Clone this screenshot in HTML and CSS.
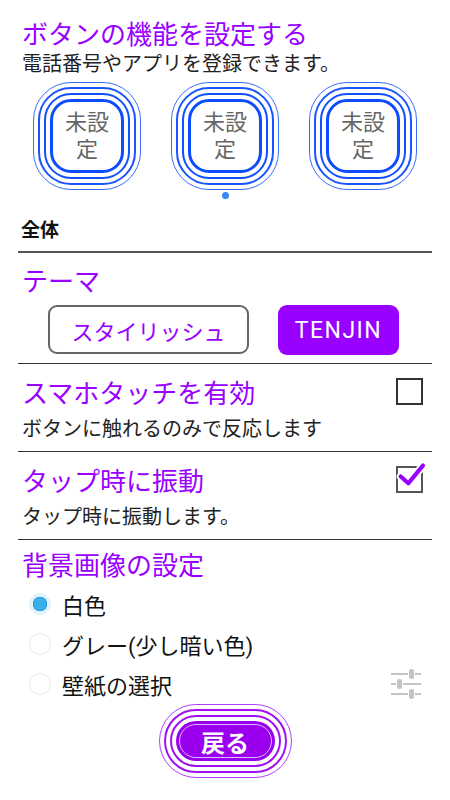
FILE: index.html
```html
<!DOCTYPE html>
<html lang="ja">
<head>
<meta charset="utf-8">
<title>ボタンの機能を設定する</title>
<link rel="stylesheet" href="styles.css">
</head>
<body>
<div class="page">
  <header class="intro">
    <h1 class="title">ボタンの機能を設定する</h1>
    <p class="lead">電話番号やアプリを登録できます。</p>
  </header>

  <div class="slots">
    <div class="slot">
      <div class="r1"><div class="r2"><div class="r3"><div class="r4"><span>未設<br>定</span></div></div></div></div>
      <span class="dot off"></span>
    </div>
    <div class="slot">
      <div class="r1"><div class="r2"><div class="r3"><div class="r4"><span>未設<br>定</span></div></div></div></div>
      <span class="dot"></span>
    </div>
    <div class="slot">
      <div class="r1"><div class="r2"><div class="r3"><div class="r4"><span>未設<br>定</span></div></div></div></div>
      <span class="dot off"></span>
    </div>
  </div>

  <div class="group">全体</div>

  <section class="sec theme">
    <h2 class="sec-title">テーマ</h2>
    <div class="theme-btns">
      <button class="btn-outline">スタイリッシュ</button>
      <button class="btn-fill">TENJIN</button>
    </div>
  </section>

  <section class="sec opt">
    <div class="opt-head">
      <h2 class="sec-title">スマホタッチを有効</h2>
      <svg class="check" width="27" height="27" viewBox="0 0 27 27">
        <rect x="1" y="1" width="25" height="25" fill="none" stroke="#333" stroke-width="2"/>
      </svg>
    </div>
    <p class="desc">ボタンに触れるのみで反応します</p>
  </section>

  <section class="sec opt">
    <div class="opt-head">
      <h2 class="sec-title">タップ時に振動</h2>
      <svg class="check" width="27" height="27" viewBox="0 0 27 27">
        <rect x="1" y="1" width="25" height="25" fill="none" stroke="#555" stroke-width="2"/>
        <path d="M4.7 10.5 L12.3 17.3 L27 -0.5" fill="none" stroke="#fff" stroke-width="8" stroke-linecap="round" stroke-linejoin="round"/>
        <path d="M4.7 10.5 L12.3 17.3 L27 -0.5" fill="none" stroke="#9900ff" stroke-width="4.2" stroke-linecap="round" stroke-linejoin="round"/>
      </svg>
    </div>
    <p class="desc">タップ時に振動します。</p>
  </section>

  <section class="bg">
    <h2 class="sec-title">背景画像の設定</h2>
    <ul class="radios">
      <li class="radio-row"><span class="radio on"></span><span class="label">白色</span></li>
      <li class="radio-row"><span class="radio"></span><span class="label">グレー(少し暗い色)</span></li>
      <li class="radio-row"><span class="radio"></span><span class="label">壁紙の選択</span>
        <svg class="tune" width="31" height="30" viewBox="0 0 31 30">
          <g stroke="#c4c4c4" stroke-width="2">
            <line x1="1" y1="5" x2="18" y2="5"/><line x1="25" y1="5" x2="31" y2="5"/>
            <line x1="1" y1="15" x2="6" y2="15"/><line x1="13" y1="15" x2="31" y2="15"/>
            <line x1="1" y1="25" x2="18" y2="25"/><line x1="25" y1="25" x2="31" y2="25"/>
          </g>
          <g fill="#c4c4c4">
            <rect x="19" y="0" width="5" height="10" rx="2"/>
            <rect x="7" y="10" width="5" height="10" rx="2"/>
            <rect x="19" y="20" width="5" height="10" rx="2"/>
          </g>
        </svg>
      </li>
    </ul>
  </section>

  <div class="back-wrap">
    <button class="b1"><span class="b2"><span class="b3"><span class="b4"><span class="b5">戻る</span></span></span></span></button>
  </div>
</div>
</body>
</html>
```

FILE: styles.css
```css
* {
  box-sizing: border-box;
  margin: 0;
  padding: 0;
}

html, body {
  margin: 0;
  background: #fff;
}

body {
  width: 450px;
  height: 800px;
  overflow: hidden;
  font-family: Roboto, "Noto Sans CJK JP", sans-serif;
  color: #222;
}

.page {
  padding: 20px 18px 0;
}

.title,
.sec-title {
  font-size: 26px;
  line-height: 30px;
  font-weight: 400;
  color: #9900ff;
  padding-left: 4px;
}

.lead {
  font-size: 20px;
  line-height: 24px;
  margin-top: 2px;
  padding-left: 4px;
  color: #222;
}

/* button slots */
.slots {
  display: flex;
  justify-content: center;
  gap: 30px;
  margin-top: 6px;
}

.slot {
  display: flex;
  flex-direction: column;
  align-items: center;
  gap: 2px;
}

.r1 {
  width: 108px;
  height: 108px;
  border: 1px solid #3a6cff;
  border-radius: 38px;
  padding: 4px;
}

.r2 {
  height: 100%;
  border: 2px solid #1a55ff;
  border-radius: 33px;
  padding: 4px;
}

.r3 {
  height: 100%;
  border: 2px solid #1150ff;
  border-radius: 27px;
  padding: 4px;
}

.r4 {
  height: 100%;
  border: 3px solid #0d4cff;
  border-radius: 21px;
  display: flex;
  align-items: center;
  justify-content: center;
  text-align: center;
  font-size: 22px;
  line-height: 27px;
  color: #666;
}

.dot {
  width: 7px;
  height: 7px;
  border-radius: 50%;
  background: #3a86f5;
}

.dot.off {
  visibility: hidden;
}

.group {
  margin-top: 20px;
  font-size: 19px;
  line-height: 24px;
  font-weight: 700;
  color: #111;
  padding: 0 0 8px 3px;
  border-bottom: 2px solid #555;
}

.sec {
  border-bottom: 1px solid #333;
}

.theme {
  padding: 14px 0 8px;
}

.theme-btns {
  display: flex;
  gap: 29px;
  padding-left: 30px;
  margin-top: 8px;
}

.btn-outline,
.btn-fill {
  font-family: Roboto, "Noto Sans CJK JP", sans-serif;
  font-size: 22px;
  display: flex;
  align-items: center;
  justify-content: center;
  border-radius: 9px;
}

.btn-outline {
  width: 201px;
  height: 49px;
  border: 2px solid #666;
  background: #fff;
  color: #9900ff;
}

.btn-fill {
  width: 121px;
  height: 50px;
  border: none;
  background: #9900ff;
  color: #fff;
  font-size: 23px;
  letter-spacing: 1.5px;
}

.opt {
  padding: 15px 0 10px;
}

.opt-head {
  display: flex;
  justify-content: space-between;
  align-items: flex-start;
}

.check {
  margin-top: -1px;
  margin-right: 9px;
  overflow: visible;
}

.desc {
  margin-top: 8px;
  font-size: 20px;
  line-height: 24px;
  padding-left: 4px;
  color: #222;
}

.bg {
  padding-top: 11px;
}

.radios {
  list-style: none;
  margin-top: 3px;
}

.radio-row {
  display: flex;
  align-items: center;
  height: 40px;
  padding-left: 11px;
  font-size: 22px;
  color: #111;
}

.radio {
  width: 22px;
  height: 22px;
  border-radius: 50%;
  border: 1px solid #ececec;
  margin-right: 11px;
  flex: none;
}

.radio.on {
  border: none;
  background: radial-gradient(circle, #3aaee8 0 6px, #2d9fd8 6.5px 7px, #e2f2fb 7.5px 11px);
}

.tune {
  margin-left: auto;
  margin-right: 11px;
}

/* back button */
.back-wrap {
  display: flex;
  justify-content: center;
}

.b1 {
  width: 133px;
  height: 74px;
  border: 1px solid #b040ff;
  border-radius: 37px;
  padding: 4px;
  background: #fff;
  font-family: Roboto, "Noto Sans CJK JP", sans-serif;
}

.b2,
.b3,
.b4,
.b5 {
  display: block;
  height: 100%;
}

.b2 {
  border: 2px solid #a010f0;
  border-radius: 32px;
  padding: 4px;
}

.b3 {
  border: 2px solid #a010f0;
  border-radius: 26px;
  padding: 4px;
}

.b4 {
  border-radius: 21px;
  background: #9a00ee;
  padding: 3px;
}

.b5 {
  border: 1px solid #dcb8ff;
  border-radius: 18px;
  display: flex;
  align-items: center;
  justify-content: center;
  color: #fff;
  font-size: 24px;
  font-weight: 700;
}
```
